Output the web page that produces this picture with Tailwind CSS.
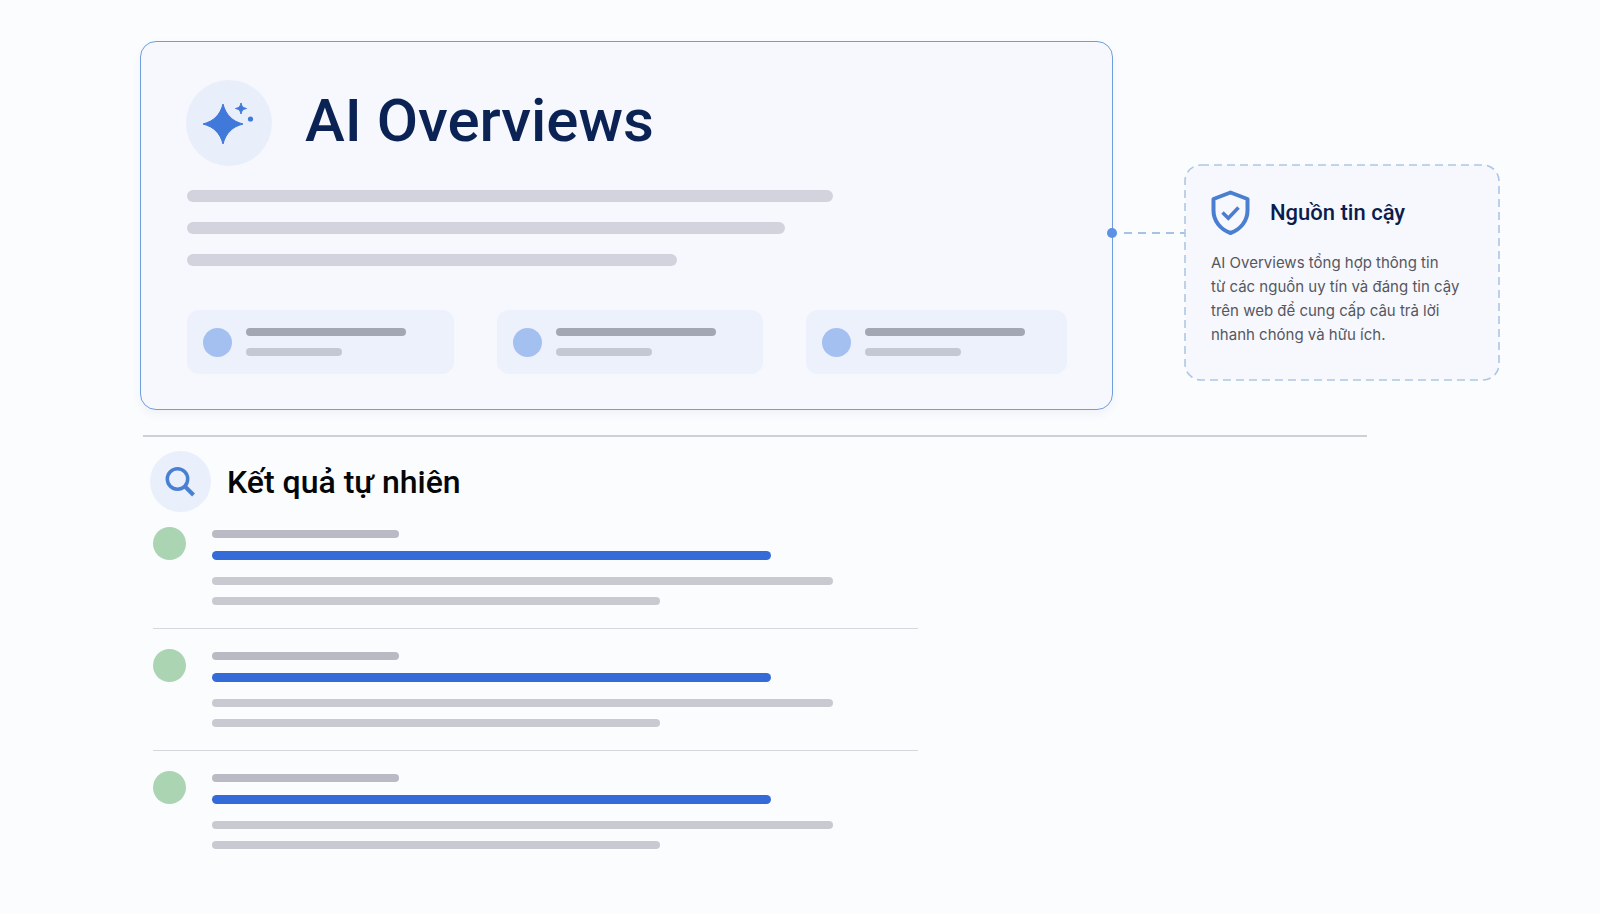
<!DOCTYPE html>
<html lang="vi">
	<head>
		<meta charset="UTF-8" />
		<meta name="viewport" content="width=device-width, initial-scale=1.0" />
		<title>AI Overviews</title>
		<script src="https://cdn.jsdelivr.net/npm/@tailwindcss/browser@4"></script>
	</head>
	<body
		class="min-h-screen bg-[#fbfcfe] font-['Roboto','Liberation_Sans',sans-serif]"
	>
		<main class="pt-[41px] pr-[101px] pb-16 pl-[140px]">
			<!-- AI Overviews + trusted source note -->
			<div class="flex items-start">
				<section
					class="relative min-w-0 flex-1 rounded-2xl border border-[#6f9edb] bg-[#f7f8fd] pt-[38px] pr-[45px] pb-[35px] pl-[46px] shadow-[0_4px_10px_rgba(60,90,150,0.06)]"
				>
					<header class="flex items-center gap-8">
						<svg class="size-[86px] shrink-0 overflow-visible" viewBox="0 0 86 86">
							<circle cx="42" cy="43" r="43" fill="#e9eefb" />
							<g fill="#4179da">
								<path
									d="M36 24C39 35 45 41 56 44C45 47 39 53 36 64C33 53 27 47 16 44C27 41 33 35 36 24Z"
									stroke="#4179da"
									stroke-linejoin="round"
								/>
								<path
									d="M54 23C55 26.5 55.5 27.5 59.5 28.5C55.5 29.5 55 30.5 54 34C53 30.5 52.5 29.5 48.5 28.5C52.5 27.5 53 26.5 54 23Z"
									stroke="#4179da"
									stroke-linejoin="round"
								/>
								<circle cx="63.5" cy="39" r="2.6" />
							</g>
						</svg>
						<h1 class="pb-1 text-[60px] leading-none font-medium text-[#0b2254]">
							AI Overviews
						</h1>
					</header>

					<!-- Summary lines -->
					<div class="mt-6 space-y-5">
						<div class="h-3 max-w-[646px] rounded-full bg-[#d2d3dc]"></div>
						<div class="h-3 max-w-[598px] rounded-full bg-[#d2d3dc]"></div>
						<div class="h-3 max-w-[490px] rounded-full bg-[#d2d3dc]"></div>
					</div>

					<!-- Source chips -->
					<div class="mt-11 grid grid-cols-[1fr_1fr_261px] gap-[43px]">
						<div class="flex h-16 items-center rounded-xl bg-[#edf1fc] px-4">
							<div class="size-[29px] shrink-0 rounded-full bg-[#a3c0f1]"></div>
							<div class="ml-[14px] space-y-3">
								<div class="h-2 w-40 rounded-full bg-[#a3a7b3]"></div>
								<div class="h-2 w-24 rounded-full bg-[#c4c8d3]"></div>
							</div>
						</div>
						<div class="flex h-16 items-center rounded-xl bg-[#edf1fc] px-4">
							<div class="size-[29px] shrink-0 rounded-full bg-[#a3c0f1]"></div>
							<div class="ml-[14px] space-y-3">
								<div class="h-2 w-40 rounded-full bg-[#a3a7b3]"></div>
								<div class="h-2 w-24 rounded-full bg-[#c4c8d3]"></div>
							</div>
						</div>
						<div class="flex h-16 items-center rounded-xl bg-[#edf1fc] px-4">
							<div class="size-[29px] shrink-0 rounded-full bg-[#a3c0f1]"></div>
							<div class="ml-[14px] space-y-3">
								<div class="h-2 w-40 rounded-full bg-[#a3a7b3]"></div>
								<div class="h-2 w-24 rounded-full bg-[#c4c8d3]"></div>
							</div>
						</div>
					</div>

					<!-- Connector dot on the card edge -->
					<span
						class="absolute top-[186px] -right-[5px] size-[10px] rounded-full bg-[#5b92e5]"
					></span>
				</section>

				<svg class="mt-[191px] h-[2px] w-[72px] shrink-0" viewBox="0 0 72 2">
					<path
						d="M11 1H72"
						stroke="#a6c3e6"
						stroke-width="2"
						stroke-dasharray="8 6"
					/>
				</svg>

				<aside
					class="relative mt-[124px] w-[314px] shrink-0 rounded-2xl bg-[#f7f8fd] px-[26px] pt-[25px] pb-[33px]"
				>
					<svg class="absolute inset-0 size-full overflow-visible" fill="none">
						<rect
							width="100%"
							height="100%"
							rx="16"
							stroke="#adc6e4"
							stroke-width="1.6"
							stroke-dasharray="8 5"
						/>
					</svg>
					<div class="flex items-center gap-5">
						<svg
							class="h-[45px] w-[39px] shrink-0"
							viewBox="0 0 39 45"
							fill="none"
							stroke="#4a7fd0"
							stroke-width="4"
							stroke-linejoin="round"
						>
							<path
								d="M19.5 2.5L36.5 9V20.5C36.5 31 29.5 39.5 19.5 43C9.5 39.5 2.5 31 2.5 20.5V9Z"
							/>
							<path
								d="M11.5 22.5L17.3 28.3L27.5 17.5"
								stroke-width="3.5"
								stroke-linejoin="miter"
							/>
						</svg>
						<h2 class="text-[22px] leading-7 font-medium text-[#0a1d4d]">
							Nguồn tin cậy
						</h2>
					</div>
					<p
						class="mt-4 font-['Inter','Liberation_Sans',sans-serif] text-[15px] leading-6 whitespace-nowrap text-[#55575e]"
					>
						AI Overviews tổng hợp thông tin<br />
						từ các nguồn uy tín và đáng tin cậy<br />
						trên web để cung cấp câu trả lời<br />
						nhanh chóng và hữu ích.
					</p>
				</aside>
			</div>

			<hr class="mt-[25px] mr-[132px] ml-[3px] border-t-2 border-[#cdd0d5]" />

			<!-- Organic results -->
			<section class="mt-[14px] pl-[10px]">
				<header class="flex items-center gap-4">
					<svg class="size-[61px] shrink-0" viewBox="0 0 61 61" fill="none">
						<circle cx="30.5" cy="30.5" r="30.5" fill="#e9effb" />
						<g stroke="#4a80d2" stroke-width="3.5">
							<circle cx="27.5" cy="28" r="10.2" />
							<path d="M34.5 35L43.5 44" stroke-width="4" />
						</g>
					</svg>
					<h2 class="text-[32px] leading-10 font-medium text-[#050608]">
						Kết quả tự nhiên
					</h2>
				</header>

				<ul class="mt-[15px] ml-[3px] max-w-[765px]">
					<li class="flex items-start gap-[26px] border-b border-[#d5d7dc] pb-[23px]">
						<div class="size-[33px] shrink-0 rounded-full bg-[#abd4b3]"></div>
						<div class="flex-1 pt-[3px]">
							<div class="h-2 max-w-[187px] rounded-full bg-[#b9bac3]"></div>
							<div class="mt-[13px] h-[9px] max-w-[559px] rounded-full bg-[#346bd8]"></div>
							<div class="mt-[17px] h-2 max-w-[621px] rounded-full bg-[#c9cad1]"></div>
							<div class="mt-3 h-2 max-w-[448px] rounded-full bg-[#c9cad1]"></div>
						</div>
					</li>
					<li class="flex items-start gap-[26px] border-b border-[#d5d7dc] pt-5 pb-[23px]">
						<div class="size-[33px] shrink-0 rounded-full bg-[#abd4b3]"></div>
						<div class="flex-1 pt-[3px]">
							<div class="h-2 max-w-[187px] rounded-full bg-[#b9bac3]"></div>
							<div class="mt-[13px] h-[9px] max-w-[559px] rounded-full bg-[#346bd8]"></div>
							<div class="mt-[17px] h-2 max-w-[621px] rounded-full bg-[#c9cad1]"></div>
							<div class="mt-3 h-2 max-w-[448px] rounded-full bg-[#c9cad1]"></div>
						</div>
					</li>
					<li class="flex items-start gap-[26px] pt-5">
						<div class="size-[33px] shrink-0 rounded-full bg-[#abd4b3]"></div>
						<div class="flex-1 pt-[3px]">
							<div class="h-2 max-w-[187px] rounded-full bg-[#b9bac3]"></div>
							<div class="mt-[13px] h-[9px] max-w-[559px] rounded-full bg-[#346bd8]"></div>
							<div class="mt-[17px] h-2 max-w-[621px] rounded-full bg-[#c9cad1]"></div>
							<div class="mt-3 h-2 max-w-[448px] rounded-full bg-[#c9cad1]"></div>
						</div>
					</li>
				</ul>
			</section>
		</main>
	</body>
</html>
